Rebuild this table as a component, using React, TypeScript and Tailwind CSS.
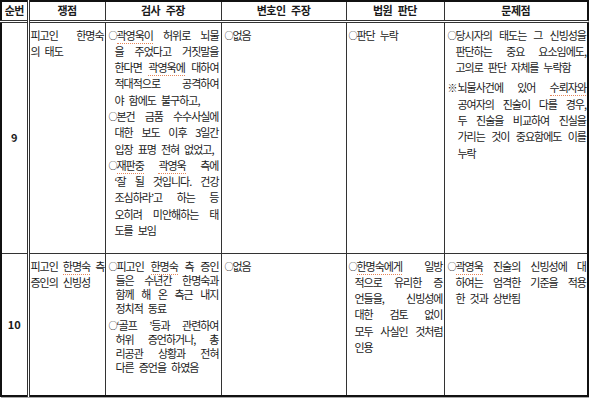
import type { ReactNode } from "react";

// spell-check marks under some words, like the word processor shows them
function Sq({ children }: { children: ReactNode }) {
  return <span className="border-b border-dotted border-[#e5865a]">{children}</span>;
}

function Mark({ sym = "○" }: { sym?: string }) {
  if (sym === "○") {
    return (
      <span className="relative -top-[1px] inline-block w-[8px] text-[9px] leading-none tracking-normal">
        ○
      </span>
    );
  }
  return (
    <span className="inline-block w-[10px] text-[10px] leading-none tracking-normal">{sym}</span>
  );
}

// one paragraph, lines broken as in the original, hanging indent after the marker
function Para({
  lines,
  indent = "pl-[6px]",
  leading = "leading-[16.3px]",
  className = "",
}: {
  lines: ReactNode[];
  indent?: string;
  leading?: string;
  className?: string;
}) {
  return (
    <div className={`${leading} ${className}`}>
      {lines.map((l, i) => {
        const last = i === lines.length - 1;
        return (
          <div
            key={i}
            className={`${i > 0 ? indent : ""} ${
              last ? "text-left" : "text-justify [text-align-last:justify]"
            } whitespace-nowrap`}
          >
            {l}
          </div>
        );
      })}
    </div>
  );
}

const th =
  "border border-[#333] text-center font-bold text-[11px] tracking-[-0.5px] leading-none p-0";
const td = "border border-[#333] p-0";
const top = `${td} align-top`;
const num = `${td} align-middle text-center font-bold text-[11px] tracking-normal border-r-[3px] border-double`;

export default function App() {
  return (
    <div className="w-[590px] h-[401px] bg-white font-['Noto_Sans_CJK_KR',sans-serif] text-[11px] tracking-[-1px] [word-spacing:3.5px] text-[#1a1a1a]">
      <div className="w-[588px] shadow-[1px_1px_0_#aaa]">
        <table className="w-[587px] table-fixed border-collapse border-2 border-[#111]">
          <colgroup>
            <col className="w-[27px]" />
            <col className="w-[77px]" />
            <col className="w-[116px]" />
            <col className="w-[125px]" />
            <col className="w-[98px]" />
            <col className="w-[144px]" />
          </colgroup>
          <thead>
            <tr className="h-[20px] border-b-[3px] border-double border-[#333]">
              <th className={`${th} border-r-[3px] border-double`}>순번</th>
              <th className={th}>쟁점</th>
              <th className={th}>검사 주장</th>
              <th className={th}>변호인 주장</th>
              <th className={th}>법원 판단</th>
              <th className={th}>문제점</th>
            </tr>
          </thead>
          <tbody>
            <tr className="h-[232px]">
              <td className={num}>9</td>
              <td className={`${top} px-[1px] pt-[4px]`}>
                <Para lines={["피고인 한명숙", "의 태도"]} indent="" />
              </td>
              <td className={`${top} pl-[3px] pr-[2px] pt-[4px]`}>
                <Para
                  lines={[
                    <>
                      <Mark />
                      <Sq>곽영욱이</Sq> 허위로 뇌물
                    </>,
                    "을 주었다고 거짓말을",
                    <>
                      한다면 <Sq>곽영욱에</Sq> 대하여
                    </>,
                    "적대적으로 공격하여",
                    "야 함에도 불구하고,",
                  ]}
                />
                <Para
                  lines={[
                    <>
                      <Mark />
                      본건 금품 수수사실에
                    </>,
                    "대한 보도 이후 3일간",
                    "입장 표명 전혀 없었고,",
                  ]}
                />
                <Para
                  lines={[
                    <>
                      <Mark />
                      <Sq>재판중</Sq> <Sq>곽영욱</Sq> 측에
                    </>,
                    "‘잘 될 것입니다. 건강",
                    "조심하라’고 하는 등",
                    "오히려 미안해하는 태",
                    "도를 보임",
                  ]}
                />
              </td>
              <td className={`${top} pl-[3px] pt-[4px]`}>
                <Para
                  lines={[
                    <>
                      <Mark />
                      없음
                    </>,
                  ]}
                />
              </td>
              <td className={`${top} pl-[2px] pt-[4px]`}>
                <Para
                  lines={[
                    <>
                      <Mark />
                      판단 누락
                    </>,
                  ]}
                />
              </td>
              <td className={`${top} pl-[3px] pr-[1px] pt-[4px]`}>
                <Para
                  indent="pl-[8px]"
                  lines={[
                    <>
                      <Mark />
                      당시자의 태도는 그 신빙성을
                    </>,
                    "판단하는 중요 요소임에도,",
                    "고의로 판단 자체를 누락함",
                  ]}
                />
                <Para
                  className="mt-[4px]"
                  indent="pl-[10px]"
                  lines={[
                    <>
                      <Mark sym="※" />
                      뇌물사건에 있어 <Sq>수뢰자와</Sq>
                    </>,
                    "공여자의 진술이 다를 경우,",
                    "두 진술을 비교하여 진실을",
                    "가리는 것이 중요함에도 이를",
                    "누락",
                  ]}
                />
              </td>
            </tr>
            <tr className="h-[143px]">
              <td className={num}>10</td>
              <td className={`${top} px-[1px] pt-[4px]`}>
                <Para
                  indent=""
                  lines={[
                    <>
                      피고인 <Sq>한명숙</Sq> 측
                    </>,
                    "증인의 신빙성",
                  ]}
                />
              </td>
              <td className={`${top} pl-[3px] pr-[2px] pt-[5px]`}>
                <Para
                  indent="pl-[7px]"
                  leading="leading-[14px]"
                  lines={[
                    <>
                      <Mark />
                      피고인 <Sq>한명숙</Sq> 측 증인
                    </>,
                    "들은 수년간 한명숙과",
                    "함께 해 온 측근 내지",
                    "정치적 동료",
                  ]}
                />
                <Para
                  className="mt-[3px]"
                  indent="pl-[7px]"
                  leading="leading-[14px]"
                  lines={[
                    <>
                      <Mark />
                      ‘골프 ’등과 관련하여
                    </>,
                    "허위 증언하거나, 총",
                    "리공관 상황과 전혀",
                    "다른 증언을 하였음",
                  ]}
                />
              </td>
              <td className={`${top} pl-[3px] pt-[4px]`}>
                <Para
                  lines={[
                    <>
                      <Mark />
                      없음
                    </>,
                  ]}
                />
              </td>
              <td className={`${top} pl-[2px] pr-[1px] pt-[4px]`}>
                <Para
                  lines={[
                    <>
                      <Mark />
                      <Sq>한명숙에게</Sq> 일방
                    </>,
                    "적으로 유리한 증",
                    "언들을, 신빙성에",
                    "대한 검토 없이",
                    "모두 사실인 것처럼",
                    "인용",
                  ]}
                />
              </td>
              <td className={`${top} pl-[3px] pr-[1px] pt-[4px]`}>
                <Para
                  indent="pl-[8px]"
                  lines={[
                    <>
                      <Mark />
                      <Sq>곽영욱</Sq> 진술의 신빙성에 대
                    </>,
                    "하여는 엄격한 기준을 적용",
                    "한 것과 상반됨",
                  ]}
                />
              </td>
            </tr>
          </tbody>
        </table>
      </div>
    </div>
  );
}
